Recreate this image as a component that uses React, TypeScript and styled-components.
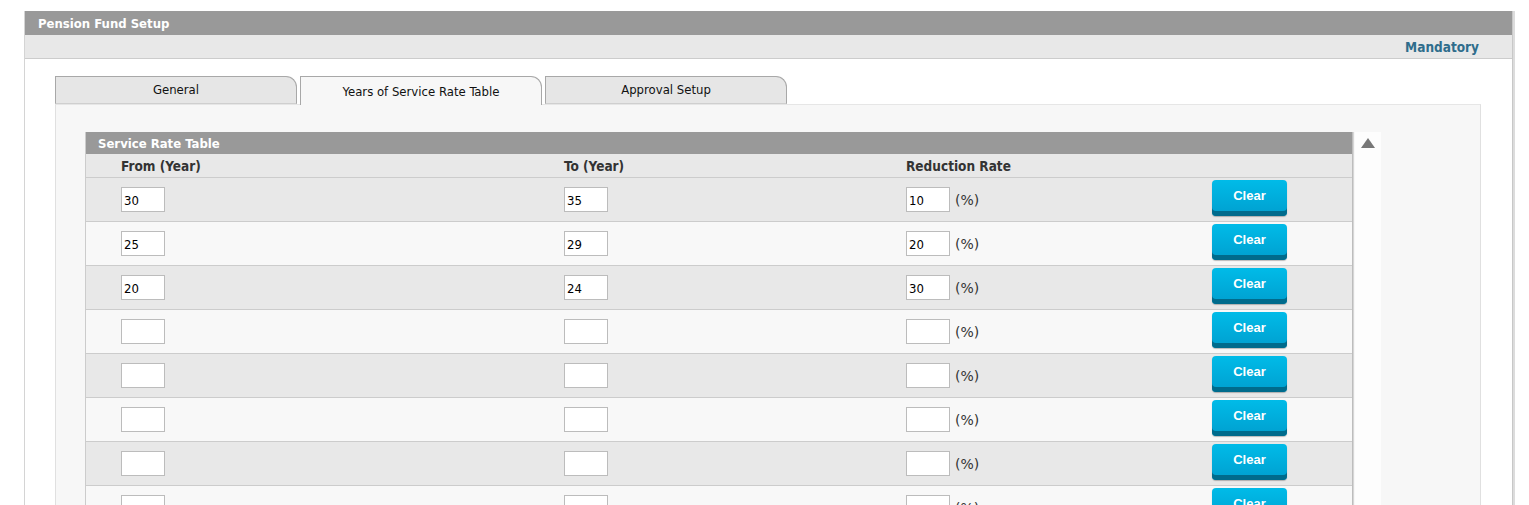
import React from 'react';
import styled, { createGlobalStyle } from 'styled-components';

interface RateRow {
    from: string;
    to: string;
    rate: string;
}

const rows: RateRow[] = [
    { from: '30', to: '35', rate: '10' },
    { from: '25', to: '29', rate: '20' },
    { from: '20', to: '24', rate: '30' },
    { from: '', to: '', rate: '' },
    { from: '', to: '', rate: '' },
    { from: '', to: '', rate: '' },
    { from: '', to: '', rate: '' },
    { from: '', to: '', rate: '' },
];

const tabs = ['General', 'Years of Service Rate Table', 'Approval Setup'];

const GlobalStyle = createGlobalStyle`
  html, body {
    margin: 0;
    padding: 0;
    overflow: hidden;
    background: #fff;
  }
  body {
    font-family: "DejaVu Sans Condensed", "DejaVu Sans", Verdana, sans-serif;
    font-stretch: condensed;
    color: #222;
  }
`

const Page = styled.div`
  padding: 11px 15px 0 24px;
`

const Panel = styled.div`
  border-left: 1px solid #d4d4d4;
  border-right: 1px solid #c8c8c8;
  box-shadow: 2px 0 0 #dcdcdc;
  background: #fff;
  width: 1487px;
`

const TitleBar = styled.div`
  height: 24px;
  line-height: 25px;
  background: #999;
  color: #fff;
  font-weight: bold;
  font-size: 13px;
  padding-left: 13px;
`

const SubBar = styled.div`
  height: 23px;
  line-height: 24px;
  background: #e8e8e8;
  border-bottom: 1px solid #ccc;
  text-align: right;
  padding-right: 33px;
  font-weight: bold;
  font-size: 13.5px;
  color: #2f6d8c;
`

const Body = styled.div`
  padding: 16px 30px 0 30px;
`

const TabStrip = styled.div`
  display: flex;
  gap: 3px;
  height: 29px;
  align-items: flex-end;
`

const Tab = styled.div<{ $active?: boolean }>`
  width: 242px;
  height: ${p => (p.$active ? '29px' : '28px')};
  box-sizing: border-box;
  border: 1px solid #a8a8a8;
  border-bottom: ${p => (p.$active ? 'none' : '1px solid #cfcfcf')};
  border-radius: 0 11px 0 0;
  background: ${p => (p.$active ? '#f7f7f7' : '#e6e6e6')};
  font-size: 13px;
  color: #111;
  text-align: center;
  padding-top: ${p => (p.$active ? '7px' : '5px')};
  margin-bottom: ${p => (p.$active ? '-1px' : '0')};
`

const TabContent = styled.div`
  width: 1426px;
  background: #f7f7f7;
  border: 1px solid #e0e0e0;
  border-top: 1px solid #e6e6e6;
  padding: 27px 0 40px 29px;
  box-sizing: border-box;
  display: flex;
`

const TableWrap = styled.div`
  width: 1266px;
  border-left: 1px solid #ccc;
  border-right: 1px solid #bdbdbd;
  box-shadow: 1px 0 0 #d6d6d6;
`

const TableTitle = styled.div`
  height: 22px;
  line-height: 24px;
  background: #999;
  color: #fff;
  font-weight: bold;
  font-size: 13px;
  padding-left: 12px;
`

const Grid = styled.div`
  display: grid;
  grid-template-columns: 443px 342px 305px 1fr;
  padding-left: 35px;
`

const HeadRow = styled(Grid)`
  height: 23px;
  line-height: 24px;
  background: #e8e8e8;
  border-bottom: 1px solid #ccc;
  font-weight: bold;
  font-size: 13.5px;
  color: #333;
`

const Row = styled(Grid)<{ $odd: boolean }>`
  height: 43px;
  background: ${p => (p.$odd ? '#e8e8e8' : '#f8f8f8')};
  border-bottom: 1px solid #ccc;
  align-items: start;
`

const Cell = styled.div`
  display: flex;
  align-items: center;
  gap: 5px;
  padding-top: 9px;
`

const Unit = styled.span`
  font-family: "DejaVu Sans", Verdana, sans-serif;
  font-stretch: normal;
  font-size: 14px;
  color: #333;
`

const Input = styled.input`
  width: 44px;
  height: 25px;
  box-sizing: border-box;
  border: 1px solid #bcbcbc;
  background: #fff;
  font-family: "DejaVu Sans Condensed", "DejaVu Sans", Verdana, sans-serif;
  font-size: 13px;
  color: #000;
  padding: 2px 2px 0;
  margin: 0;
`

const ButtonCell = styled.div`
  padding-top: 2px;
`

const ClearButton = styled.button`
  width: 75px;
  height: 36px;
  box-sizing: border-box;
  border: none;
  border-radius: 4px;
  background: linear-gradient(#00bbe8, #009fcf);
  box-shadow: inset 0 -5px 0 #006b8c, 0 1px 1px rgba(0, 0, 0, 0.25);
  color: #fff;
  font-family: "Liberation Sans", Arial, sans-serif;
  font-weight: bold;
  font-size: 13px;
  padding: 0 0 5px;
  margin-left: 1px;
  cursor: pointer;
`

const ScrollTrack = styled.div`
  width: 26px;
  margin-left: 2px;
  background: #fdfdfd;
  display: flex;
  justify-content: center;
  padding-top: 6px;
`

const UpArrow = styled.div`
  width: 0;
  height: 0;
  border-left: 7px solid transparent;
  border-right: 7px solid transparent;
  border-bottom: 10px solid #777;
`

const App = () => {
    return (
        <>
            <GlobalStyle />
            <Page>
                <Panel>
                    <TitleBar>Pension Fund Setup</TitleBar>
                    <SubBar>Mandatory</SubBar>
                    <Body>
                        <TabStrip>
                            {tabs.map((t, i) => (
                                <Tab key={t} $active={i === 1}>{t}</Tab>
                            ))}
                        </TabStrip>
                        <TabContent>
                            <TableWrap>
                                <TableTitle>Service Rate Table</TableTitle>
                                <HeadRow>
                                    <div>From (Year)</div>
                                    <div>To (Year)</div>
                                    <div>Reduction Rate</div>
                                    <div />
                                </HeadRow>
                                {rows.map((r, i) => (
                                    <Row key={i} $odd={i % 2 === 0}>
                                        <Cell><Input defaultValue={r.from} /></Cell>
                                        <Cell><Input defaultValue={r.to} /></Cell>
                                        <Cell><Input defaultValue={r.rate} /><Unit>(%)</Unit></Cell>
                                        <ButtonCell><ClearButton>Clear</ClearButton></ButtonCell>
                                    </Row>
                                ))}
                            </TableWrap>
                            <ScrollTrack>
                                <UpArrow />
                            </ScrollTrack>
                        </TabContent>
                    </Body>
                </Panel>
            </Page>
        </>
    );
};

export default App;
